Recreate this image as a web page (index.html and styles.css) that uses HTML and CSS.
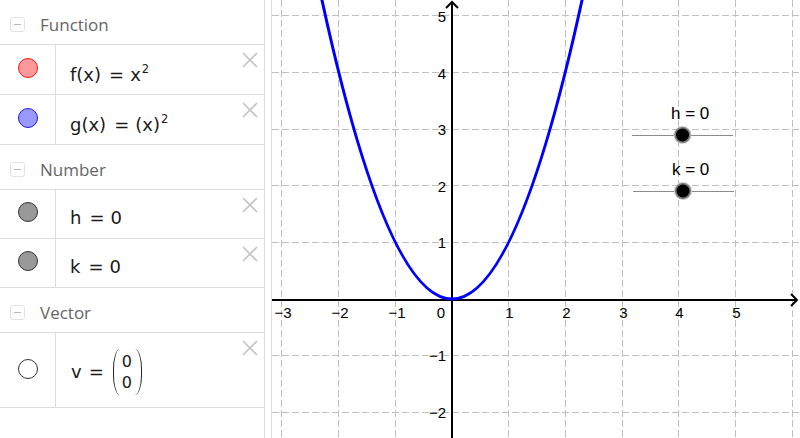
FILE: index.html
```html
<!DOCTYPE html>
<html lang="en">
<head>
    <meta charset="UTF-8">
    <meta name="viewport" content="width=device-width, initial-scale=1.0">
    <title>Graphing Calculator</title>
    <link rel="stylesheet" href="styles.css">
</head>
<body>
<div class="app">
    <div class="algebra">
        <div class="group-head"><span class="collapse"></span><span class="group-title">Function</span></div>
        <div class="item row-fn">
            <div class="marble-cell"><span class="marble marble-red"></span></div>
            <div class="formula">f(x)<span class="eq">=</span>x<sup>2</sup></div>
            <svg class="delete" width="16" height="16" viewBox="0 0 16 16"><path d="M1 1 L15 15 M15 1 L1 15"/></svg>
        </div>
        <div class="item row-fn">
            <div class="marble-cell"><span class="marble marble-blue"></span></div>
            <div class="formula">g(x)<span class="eq">=</span>(x)<sup>2</sup></div>
            <svg class="delete" width="16" height="16" viewBox="0 0 16 16"><path d="M1 1 L15 15 M15 1 L1 15"/></svg>
        </div>

        <div class="group-head"><span class="collapse"></span><span class="group-title">Number</span></div>
        <div class="item row-num">
            <div class="marble-cell"><span class="marble marble-gray"></span></div>
            <div class="formula">h<span class="eq">=</span>0</div>
            <svg class="delete" width="16" height="16" viewBox="0 0 16 16"><path d="M1 1 L15 15 M15 1 L1 15"/></svg>
        </div>
        <div class="item row-num">
            <div class="marble-cell"><span class="marble marble-gray"></span></div>
            <div class="formula">k<span class="eq">=</span>0</div>
            <svg class="delete" width="16" height="16" viewBox="0 0 16 16"><path d="M1 1 L15 15 M15 1 L1 15"/></svg>
        </div>

        <div class="group-head"><span class="collapse"></span><span class="group-title">Vector</span></div>
        <div class="item row-vec">
            <div class="marble-cell"><span class="marble marble-white"></span></div>
            <div class="formula formula-vec">v<span class="eq">=</span>
                <span class="paren paren-left"></span>
                <span class="matrix"><span>0</span><span>0</span></span>
                <span class="paren paren-right"></span>
            </div>
            <svg class="delete" width="16" height="16" viewBox="0 0 16 16"><path d="M1 1 L15 15 M15 1 L1 15"/></svg>
        </div>
    </div>

    <div class="splitter"></div>

    <div class="graphics">
        <svg class="plot" width="528" height="438" viewBox="0 0 528 438">
            <!-- grid -->
            <g class="grid">
                <line x1="9.5" y1="0" x2="9.5" y2="438"/>
                <line x1="66.5" y1="0" x2="66.5" y2="438"/>
                <line x1="123.5" y1="0" x2="123.5" y2="438"/>
                <line x1="236.5" y1="0" x2="236.5" y2="438"/>
                <line x1="293.5" y1="0" x2="293.5" y2="438"/>
                <line x1="350.5" y1="0" x2="350.5" y2="438"/>
                <line x1="406.5" y1="0" x2="406.5" y2="438"/>
                <line x1="463.5" y1="0" x2="463.5" y2="438"/>
                <line x1="520.5" y1="0" x2="520.5" y2="438"/>
                <line x1="0" y1="15.5" x2="528" y2="15.5"/>
                <line x1="0" y1="72.5" x2="528" y2="72.5"/>
                <line x1="0" y1="129.5" x2="528" y2="129.5"/>
                <line x1="0" y1="185.5" x2="528" y2="185.5"/>
                <line x1="0" y1="242.5" x2="528" y2="242.5"/>
                <line x1="0" y1="355.5" x2="528" y2="355.5"/>
                <line x1="0" y1="412.5" x2="528" y2="412.5"/>
            </g>

            <!-- axes -->
            <g class="axis">
                <line x1="0" y1="300" x2="525" y2="300"/>
                <polyline points="519,294 525,300 519,306"/>
                <line x1="180" y1="2" x2="180" y2="438"/>
                <polyline points="174,8 180,2 186,8"/>
            </g>

            <g class="tick-x">
                <text x="11" y="318">−3</text>
                <text x="68" y="318">−2</text>
                <text x="125" y="318">−1</text>
                <text x="237.5" y="318">1</text>
                <text x="294.5" y="318">2</text>
                <text x="351.5" y="318">3</text>
                <text x="407.5" y="318">4</text>
                <text x="464.5" y="318">5</text>
            </g>
            <text class="tick-origin" x="169" y="318">0</text>
            <g class="tick-y">
                <text x="174" y="21.5">5</text>
                <text x="174" y="78.5">4</text>
                <text x="174" y="135">3</text>
                <text x="174" y="191.5">2</text>
                <text x="174" y="248">1</text>
                <text x="174" y="361">−1</text>
                <text x="174" y="417.5">−2</text>
            </g>

            <!-- f and g: y = x^2, g drawn on top -->
            <path class="curve" d="M44.2 -27 Q180 625 315.8 -27"/>

            <!-- sliders -->
            <g class="slider">
                <text x="399" y="119">h = 0</text>
                <line x1="360" y1="135.5" x2="461" y2="135.5"/>
                <circle class="knob-halo" cx="410.5" cy="135" r="9"/>
                <circle class="knob-ring" cx="410.5" cy="135" r="8"/>
                <circle class="knob" cx="410.5" cy="135" r="6.5"/>
            </g>
            <g class="slider">
                <text x="400" y="175">k = 0</text>
                <line x1="361" y1="191.5" x2="462" y2="191.5"/>
                <circle class="knob-halo" cx="411" cy="191" r="9"/>
                <circle class="knob-ring" cx="411" cy="191" r="8"/>
                <circle class="knob" cx="411" cy="191" r="6.5"/>
            </g>
        </svg>
    </div>
</div>
</body>
</html>
```

FILE: styles.css
```css
/* Global Styles */
body, html {
    margin: 0;
    padding: 0;
    height: 100%;
    background-color: #fff;
    overflow: hidden;
}

.app {
    display: flex;
    height: 438px;
    width: 800px;
}

/* Algebra View */
.algebra {
    width: 264px;
    border-right: 1px solid #dcdcdc;
    display: flex;
    flex-direction: column;
}

.group-head {
    display: flex;
    align-items: center;
    height: 45px;
    box-sizing: border-box;
    padding-top: 5px;
    padding-left: 10px;
    border-bottom: 1px solid #dcdcdc;
}

.collapse {
    width: 13px;
    height: 13px;
    border: 1px solid #e2e2e2;
    border-radius: 3px;
    display: flex;
    align-items: center;
    justify-content: center;
}

.collapse::before {
    content: "";
    width: 7px;
    height: 1px;
    background-color: #b8b8b8;
}

.group-title {
    font-family: 'Open Sans', sans-serif;
    font-size: 17px;
    color: #666;
    margin-left: 15px;
}

.item {
    display: flex;
    border-bottom: 1px solid #dcdcdc;
}

.row-fn { height: 49px; }
.row-num { height: 48px; }
.row-vec { height: 74px; }

.marble-cell {
    width: 56px;
    border-right: 1px solid #dcdcdc;
    display: flex;
    justify-content: center;
    padding-top: 13px;
    box-sizing: border-box;
}

.row-num .marble-cell { padding-top: 12px; }
.row-vec .marble-cell { padding-top: 26px; }

.marble {
    width: 18px;
    height: 18px;
    border-radius: 50%;
    border: 1px solid #333;
}

.marble-red {
    background-color: #ff9999;
    border-color: #e81818;
}

.marble-blue {
    background-color: #9999ff;
    border-color: #1818e8;
}

.marble-gray {
    background-color: #999;
    border-color: #333;
}

.marble-white {
    background-color: #fff;
    border-color: #333;
}

.formula {
    flex: 1;
    font-family: 'DejaVu Sans', sans-serif;
    font-size: 18px;
    line-height: 20px;
    color: #1a1a1a;
    padding-left: 14px;
    padding-top: 20px;
    white-space: nowrap;
}

.row-num .formula { padding-top: 18px; }

.formula sup {
    font-size: 11.5px;
    line-height: 0;
    vertical-align: 8px;
    margin-left: 1px;
}

.eq {
    margin: 0 6px 0 8px;
}

.formula-vec {
    display: flex;
    align-items: center;
    padding-top: 4px;
    padding-left: 15px;
}

.formula-vec .eq {
    margin: 0 9px 0 7px;
}

.paren {
    width: 7px;
    height: 46px;
    box-sizing: border-box;
}

.paren-left {
    border-left: 1.6px solid #222;
    border-radius: 8px 0 0 8px / 23px 0 0 23px;
}

.paren-right {
    border-right: 1.6px solid #222;
    border-radius: 0 8px 8px 0 / 0 23px 23px 0;
}

.matrix {
    display: flex;
    flex-direction: column;
    align-items: center;
    font-size: 16px;
    line-height: 21px;
    padding: 0 3px 0 2px;
}

.delete {
    margin-top: 7px;
    margin-right: 6px;
}

.delete path {
    stroke: #c4c4c4;
    stroke-width: 1.6;
    fill: none;
}

/* Splitter */
.splitter {
    width: 6px;
    border-right: 1px solid #dcdcdc;
}

/* Graphics View */
.graphics {
    flex: 1;
}

.plot {
    display: block;
}

.grid line {
    stroke: #c0c0c0;
    stroke-width: 1;
    stroke-dasharray: 7 3;
}

.axis line, .axis polyline {
    stroke: #000;
    stroke-width: 2;
    fill: none;
}

.plot text {
    font-family: 'Liberation Sans', Arial, sans-serif;
    font-size: 15px;
    fill: #000;
}

.tick-x text {
    text-anchor: middle;
}

.tick-y text {
    text-anchor: end;
}

.tick-origin {
    text-anchor: middle;
}

.curve {
    stroke: #0000ff;
    stroke-width: 3;
    fill: none;
}

.slider line {
    stroke: #8c8c8c;
    stroke-width: 1;
}

.plot .slider text {
    font-size: 17px;
}

.knob-halo { fill: #c8c8c8; }
.knob-ring { fill: #7a7a7a; }
.knob { fill: #000; }
```
